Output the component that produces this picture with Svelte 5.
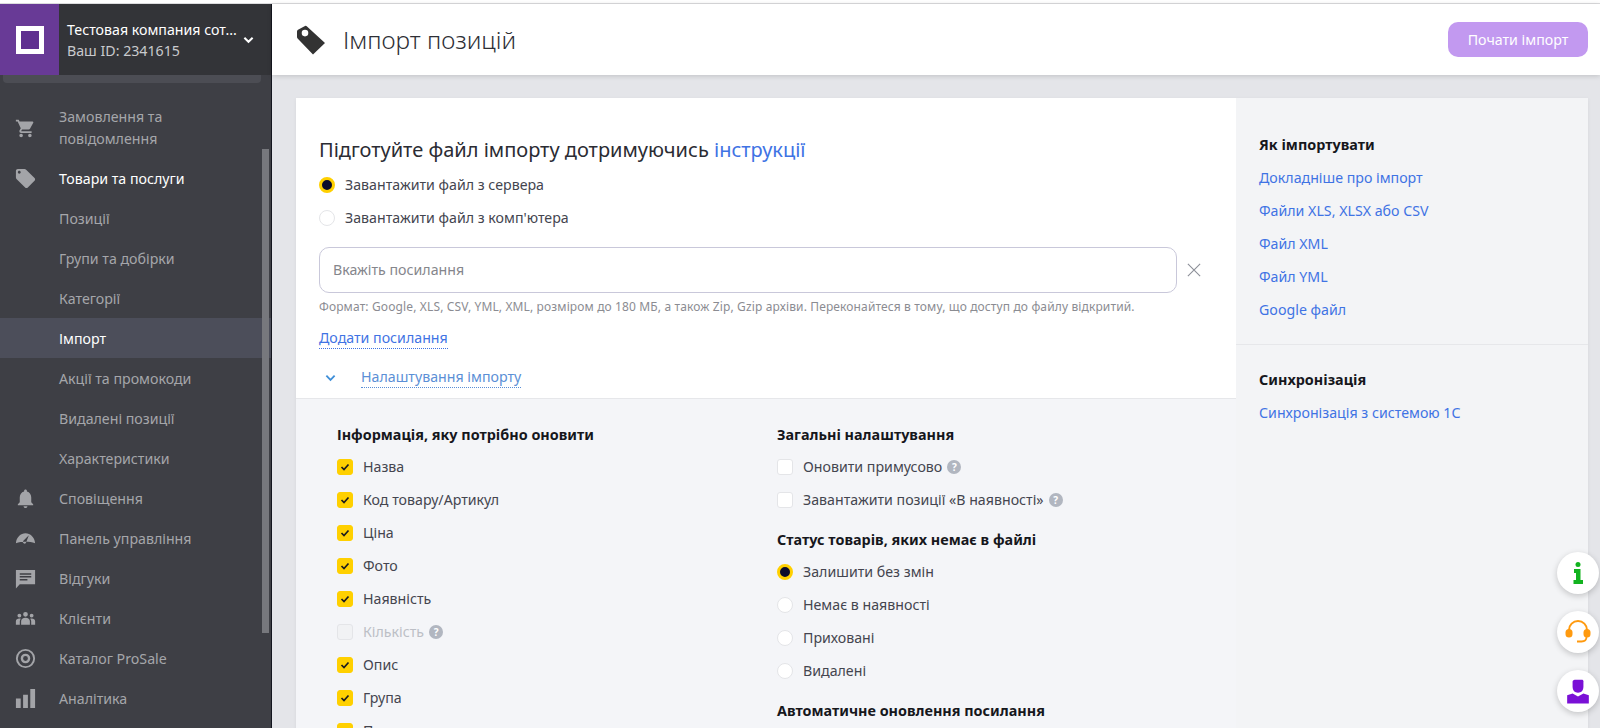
<script>
  const icons = {
    cart: 'M7 18c-1.1 0-1.99.9-1.99 2S5.9 22 7 22s2-.9 2-2-.9-2-2-2zM1 2v2h2l3.6 7.59-1.35 2.45c-.16.28-.25.61-.25.96 0 1.1.9 2 2 2h12v-2H7.42c-.14 0-.25-.11-.25-.25l.03-.12.9-1.63h7.45c.75 0 1.41-.41 1.75-1.03l3.58-6.49c.08-.14.12-.31.12-.48 0-.55-.45-1-1-1H5.21l-.94-2H1zm16 16c-1.1 0-1.99.9-1.99 2s.89 2 1.99 2 2-.9 2-2-.9-2-2-2z',
    tag: 'M21.41 11.58l-9-9C12.05 2.22 11.55 2 11 2H4c-1.1 0-2 .9-2 2v7c0 .55.22 1.05.59 1.42l9 9c.36.36.86.58 1.41.58.55 0 1.05-.22 1.41-.59l7-7c.37-.36.59-.86.59-1.41 0-.55-.23-1.06-.59-1.42zM5.5 7C4.67 7 4 6.33 4 5.5S4.67 4 5.5 4 7 4.67 7 5.5 6.33 7 5.5 7z',
    bell: 'M12 22c1.1 0 2-.9 2-2h-4c0 1.1.89 2 2 2zm6-6v-5c0-3.07-1.64-5.64-4.5-6.32V4c0-.83-.67-1.5-1.5-1.5s-1.5.67-1.5 1.5v.68C7.63 5.36 6 7.92 6 11v5l-2 2v1h16v-1l-2-2z',
    gauge: 'M2 17C2.500 10.500 7 6.500 12 6.500S21.500 10.500 22 17c-3-1-6.500-1.500-10-1.500S5 16 2 17zM9.500 14.500L15.500 8.500 12.500 16.500a1.700 1.700 0 0 1-3-2z',
    comment: 'M2 3h20v15H6l-4 4.500zM6 6.500h12v1.500H6zM6 9.500h12v1.500H6zM6 12.500h8v1.500H6z',
    people: 'M12 4.500a2.700 2.700 0 1 1 0 5.400 2.700 2.700 0 0 1 0-5.400zM5 6.500a2.200 2.200 0 1 1 0 4.400 2.200 2.200 0 0 1 0-4.400zm14 0a2.200 2.200 0 1 1 0 4.400 2.200 2.200 0 0 1 0-4.400zM12 11c3 0 5 1.600 5 4v4H7v-4c0-2.400 2-4 5-4zM5 12c.6 0 1.100.1 1.600.2-.7.8-1.100 1.800-1.100 3V19H1v-4c0-1.900 1.700-3 4-3zm14 0c2.300 0 4 1.100 4 3v4h-4.500v-3.800c0-1.200-.4-2.200-1.100-3 .5-.1 1-.2 1.600-.2z',
    target: 'M12 2a10 10 0 1 0 0 20 10 10 0 0 0 0-20zm0 18a8 8 0 1 1 0-16 8 8 0 0 1 0 16zm0-13a5 5 0 1 0 0 10 5 5 0 0 0 0-10zm0 7.500a2.500 2.500 0 1 1 0-5 2.500 2.500 0 0 1 0 5z',
    bars: 'M2 12h5v10H2zM9.500 8h5v14h-5zM17 2h5v20h-5z'
  }

  const nav = [
    { label: 'Замовлення та повідомлення', icon: 'cart', tall: true },
    { label: 'Товари та послуги', icon: 'tag', bright: true },
    { label: 'Позиції' },
    { label: 'Групи та добірки' },
    { label: 'Категорії' },
    { label: 'Імпорт', active: true },
    { label: 'Акції та промокоди' },
    { label: 'Видалені позиції' },
    { label: 'Характеристики' },
    { label: 'Сповіщення', icon: 'bell' },
    { label: 'Панель управління', icon: 'gauge' },
    { label: 'Відгуки', icon: 'comment' },
    { label: 'Клієнти', icon: 'people' },
    { label: 'Каталог ProSale', icon: 'target' },
    { label: 'Аналітика', icon: 'bars' }
  ]

  const fields = [
    { label: 'Назва', on: true },
    { label: 'Код товару/Артикул', on: true },
    { label: 'Ціна', on: true },
    { label: 'Фото', on: true },
    { label: 'Наявність', on: true },
    { label: 'Кількість', off: true, help: true },
    { label: 'Опис', on: true },
    { label: 'Група', on: true },
    { label: 'Параметри', on: true }
  ]

  const general = [
    { label: 'Оновити примусово', help: true },
    { label: 'Завантажити позиції «В наявності»', help: true }
  ]

  const statuses = ['Залишити без змін', 'Немає в наявності', 'Приховані', 'Видалені']
  const howto = ['Докладніше про імпорт', 'Файли XLS, XLSX або CSV', 'Файл XML', 'Файл YML', 'Google файл']
</script>

{#snippet check(item)}
  <label class="opt" class:disabled={item.off}>
    <span class="box" class:on={item.on}>
      {#if item.on}
        <svg viewBox="0 0 16 16" width="16" height="16"><path d="M4.500 8l2.500 2.500 4.500-5" fill="none" stroke="#1b1b1f" stroke-width="1.700" /></svg>
      {/if}
    </span>
    <span>{item.label}</span>
    {#if item.help}<span class="help">?</span>{/if}
  </label>
{/snippet}

{#snippet radio(label, on)}
  <label class="opt">
    <span class="dot" class:on></span>
    <span>{label}</span>
  </label>
{/snippet}

<div class="page">
  <div class="topline"></div>
  <div class="layout">
    <aside class="sidebar">
      <div class="account">
        <div class="logo"><span class="logo-mark"></span></div>
        <div class="company">
          <div class="company-name">Тестовая компания сот...</div>
          <div class="company-id">Ваш ID: 2341615</div>
        </div>
        <svg class="account-arrow" viewBox="0 0 12 8" width="11" height="8"><path d="M1.500 1.500L6 6l4.500-4.500" fill="none" stroke="#fff" stroke-width="2.200" /></svg>
      </div>
      <div class="stub"></div>
      <nav class="nav">
        {#each nav as item}
          <div class="nav-item" class:tall={item.tall} class:bright={item.bright} class:active={item.active}>
            <span class="nav-icon">
              {#if item.icon}
                <svg viewBox="0 0 24 24" width={item.icon === 'cart' || item.icon === 'people' ? 21 : 23} height={item.icon === 'cart' || item.icon === 'people' ? 21 : 23}><path d={icons[item.icon]} fill="#a3a4a8" fill-rule="evenodd" /></svg>
              {/if}
            </span>
            <span class="nav-label">{item.label}</span>
          </div>
        {/each}
      </nav>
      <div class="scrollbar"></div>
    </aside>

    <main class="main">
      <header class="header">
        <svg viewBox="7 8 30 30" width="30" height="30"><path d="M8 14.500Q8 13.300 9 12.800L16 9Q17 8.500 18 9.400L36 26 24 37.500 8.600 21.500Q8 20.900 8 20zM16 12.800a3.300 3.300 0 1 0 0 6.600 3.300 3.300 0 0 0 0-6.600z" fill="#333" fill-rule="evenodd" /></svg>
        <h1>Імпорт позицій</h1>
        <button class="start">Почати імпорт</button>
      </header>

      <div class="content">
        <div class="card">
          <section class="form">
            <div class="upload">
              <h2>Підготуйте файл імпорту дотримуючись <a href="#i">інструкції</a></h2>
              <div class="source">
                {@render radio('Завантажити файл з сервера', true)}
                {@render radio("Завантажити файл з комп'ютера", false)}
              </div>
              <div class="url-row">
                <div class="url">Вкажіть посилання</div>
                <svg viewBox="0 0 16 16" width="14" height="14"><path d="M1 1l14 14M15 1L1 15" stroke="#8d9099" stroke-width="1.300" /></svg>
              </div>
              <p class="hint">Формат: Google, XLS, CSV, YML, XML, розміром до 180 МБ, а також Zip, Gzip архіви. Переконайтеся в тому, що доступ до файлу відкритий.</p>
              <div><a class="dashed" href="#a">Додати посилання</a></div>
              <div class="toggle">
                <svg viewBox="0 0 12 8" width="11" height="8"><path d="M1.500 1.500L6 6l4.500-4.500" fill="none" stroke="#3f8fd8" stroke-width="2" /></svg>
                <a class="dashed soft" href="#s">Налаштування імпорту</a>
              </div>
            </div>

            <div class="settings">
              <div class="col">
                <h3>Інформація, яку потрібно оновити</h3>
                {#each fields as f}
                  {@render check(f)}
                {/each}
              </div>
              <div class="col">
                <h3>Загальні налаштування</h3>
                {#each general as g}
                  {@render check(g)}
                {/each}
                <h3 class="next">Статус товарів, яких немає в файлі</h3>
                {#each statuses as s, i}
                  {@render radio(s, i === 0)}
                {/each}
                <h3 class="next">Автоматичне оновлення посилання</h3>
              </div>
            </div>
          </section>

          <aside class="help-panel">
            <div class="help-block first">
              <h3>Як імпортувати</h3>
              {#each howto as link}
                <a href="#h">{link}</a>
              {/each}
            </div>
            <div class="help-block">
              <h3>Синхронізація</h3>
              <a href="#c">Синхронізація з системою 1С</a>
            </div>
          </aside>
        </div>
      </div>
    </main>
  </div>

  <div class="floats">
    <div class="fab">
      <svg viewBox="0 0 24 24" width="24" height="24"><circle cx="12" cy="3.500" r="2.500" fill="#12b31f" /><path d="M8 8h6.500v11H17v4H7.500v-4H10v-7H8z" fill="#12b31f" /></svg>
    </div>
    <div class="fab">
      <svg viewBox="0 0 28 28" width="28" height="28"><path d="M5 14v-2a9 9 0 0 1 18 0v2" fill="none" stroke="#ff9a0f" stroke-width="2" /><rect x="1.500" y="11" width="7" height="8.500" rx="3.500" fill="#ff9a0f" /><rect x="19.500" y="11" width="7" height="8.500" rx="3.500" fill="#ff9a0f" /><path d="M22.500 19c0 3-2 4.500-5 4.500H13" fill="none" stroke="#ff9a0f" stroke-width="1.800" /></svg>
    </div>
    <div class="fab">
      <svg viewBox="0 0 24 24" width="26" height="26"><path d="M7 3.500c0-1 .8-2 2-2h6.500c1 0 1.500.6 1.500 1.500v5c0 3.500-2 5.500-5 5.500S7 11.500 7 8z" fill="#7a10d6" /><path d="M2 16l5-1.800 5 2.800 5-2.800 5 1.800v7.500H2z" fill="#7a10d6" /></svg>
    </div>
  </div>
</div>

<style>
  :global(body) {
    margin: 0;
    background: #e4e5e9;
  }
  .page {
    position: relative;
    height: 728px;
    overflow: hidden;
    font-family: "Noto Sans", sans-serif;
    font-size: 14.2px;
    color: #44454f;
    background: #fff;
  }
  .topline {
    height: 4px;
    box-sizing: border-box;
    border-bottom: 1px solid #dcdcde;
    background: #fff;
  }
  .layout {
    display: flex;
    height: 724px;
  }

  .sidebar {
    position: relative;
    width: 272px;
    flex: none;
    box-sizing: border-box;
    border-right: 1px solid #14161f;
    background: #3e3f45;
    overflow: hidden;
  }
  .account {
    display: flex;
    align-items: center;
    height: 71px;
    background: #333438;
  }
  .logo {
    display: flex;
    align-items: center;
    justify-content: center;
    width: 59px;
    height: 100%;
    background: #683a96;
  }
  .logo-mark {
    width: 18px;
    height: 18px;
    border: 5px solid #fff;
    background: #5f2f90;
  }
  .company {
    margin-left: 8px;
    width: 174px;
    line-height: 21px;
    white-space: nowrap;
  }
  .company-name {
    color: #fff;
  }
  .company-id {
    color: #c9cacd;
  }
  .account-arrow {
    margin-left: 2px;
  }
  .stub {
    height: 8px;
    margin: 0 10px 0 3px;
    border-radius: 0 0 4px 4px;
    background: #4c4d54;
  }
  .nav {
    padding-top: 15px;
  }
  .nav-item {
    display: flex;
    align-items: center;
    height: 40px;
    color: #a5a6aa;
    line-height: 22px;
  }
  .nav-item.tall {
    height: 60px;
  }
  .nav-item.bright {
    color: #fff;
  }
  .nav-item.active {
    background: #4c4e5a;
    color: #fff;
  }
  .nav-icon {
    display: flex;
    justify-content: center;
    width: 50px;
    margin-right: 9px;
  }
  .nav-label {
    width: 160px;
    padding-top: 2px;
  }
  .tall .nav-label {
    padding-top: 0;
  }
  .scrollbar {
    position: absolute;
    top: 145px;
    right: 2px;
    width: 7px;
    height: 484px;
    background: #77787d;
  }

  .main {
    flex: 1;
    min-width: 0;
    background: #e4e5e9;
  }
  .header {
    position: relative;
    display: flex;
    align-items: center;
    height: 71px;
    padding: 0 12px 0 24px;
    background: #fff;
    box-shadow: 0 1px 5px rgba(0, 0, 0, .16);
  }
  h1 {
    flex: 1;
    margin: 0 0 0 17px;
    font-size: 24.4px;
    font-weight: 300;
    color: #2e2f36;
  }
  .start {
    width: 140px;
    height: 35px;
    border: 0;
    border-radius: 10px;
    background: #c299f0;
    color: #fff;
    font: inherit;
  }
  .content {
    padding: 23px 12px 0 24px;
  }
  .card {
    display: flex;
    box-shadow: 0 1px 4px rgba(0, 0, 0, .06);
  }
  .form {
    flex: 1;
    min-width: 0;
    background: #fff;
  }
  .upload {
    padding: 38px 23px 0;
    height: 301px;
    box-sizing: border-box;
    border-bottom: 1px solid #e6e7ea;
  }
  h2 {
    margin: 0;
    font-size: 20px;
    font-weight: 400;
    line-height: 28px;
    color: #2b2c33;
  }
  a {
    color: #3f73e4;
    text-decoration: none;
  }
  .source {
    margin-top: 4px;
  }
  .opt {
    display: flex;
    align-items: center;
    height: 33px;
    white-space: nowrap;
  }
  .opt.disabled {
    color: #bcbfc6;
  }
  .dot {
    width: 16px;
    height: 16px;
    flex: none;
    box-sizing: border-box;
    margin-right: 10px;
    border: 1px solid #e4e5e8;
    border-radius: 50%;
    background: #fff;
  }
  .dot.on {
    border: 3px solid #ffd000;
    background: #0b0b2b;
  }
  .box {
    display: flex;
    width: 16px;
    height: 16px;
    flex: none;
    box-sizing: border-box;
    margin-right: 10px;
    border: 1px solid #e4e5e8;
    border-radius: 3px;
    background: #fff;
  }
  .box svg {
    margin: -1px;
  }
  .box.on {
    border-color: #ffd000;
    background: #ffd000;
  }
  .disabled .box {
    background: #f1f2f4;
  }
  .help {
    display: inline-flex;
    align-items: center;
    justify-content: center;
    width: 14px;
    height: 14px;
    margin-left: 5px;
    border-radius: 50%;
    background: #b1b6c0;
    color: #fff;
    font-size: 10px;
    font-weight: 700;
  }
  .url-row {
    display: flex;
    align-items: center;
    gap: 10px;
    margin-top: 13px;
    padding-right: 12px;
  }
  .url {
    flex: 1;
    height: 46px;
    box-sizing: border-box;
    padding-left: 13px;
    border: 1px solid #c9c8da;
    border-radius: 10px;
    color: #85868c;
    line-height: 44px;
  }
  .hint {
    margin: 6px 0 0;
    font-size: 12px;
    letter-spacing: .13px;
    line-height: 16px;
    color: #8b8c92;
    white-space: nowrap;
  }
  .dashed {
    display: inline-block;
    margin-top: 13px;
    line-height: 20px;
    border-bottom: 1px dotted #3f73e4;
  }
  .dashed.soft {
    margin-top: 0;
    color: #5b8fd6;
    border-bottom-color: #5b8fd6;
  }
  .toggle {
    display: flex;
    align-items: center;
    gap: 25px;
    margin-top: 18px;
    padding-left: 6px;
  }
  .settings {
    display: flex;
    padding: 25px 41px 0;
    background: #f4f5f8;
    height: 360px;
  }
  .col {
    width: 440px;
    flex: none;
  }
  h3 {
    margin: 0;
    font-size: 14.4px;
    font-weight: 700;
    line-height: 22px;
    color: #16171c;
    white-space: nowrap;
  }
  .col h3 {
    margin-bottom: 4px;
  }
  .col h3.next {
    margin-top: 13px;
  }
  .help-panel {
    width: 352px;
    flex: none;
    background: #f3f4f6;
  }
  .help-block {
    padding: 24px 23px 0;
  }
  .help-block.first {
    height: 247px;
    box-sizing: border-box;
    padding-top: 36px;
    border-bottom: 1px solid #e6e7ea;
  }
  .help-block h3 {
    margin-bottom: 5px;
  }
  .help-block a {
    display: block;
    line-height: 33px;
  }
  .floats {
    position: absolute;
    top: 552px;
    right: 1px;
    display: flex;
    flex-direction: column;
    gap: 17px;
  }
  .fab {
    display: flex;
    align-items: center;
    justify-content: center;
    width: 42px;
    height: 42px;
    border-radius: 50%;
    background: #fff;
    box-shadow: 0 2px 6px rgba(0, 0, 0, .2);
  }
</style>
